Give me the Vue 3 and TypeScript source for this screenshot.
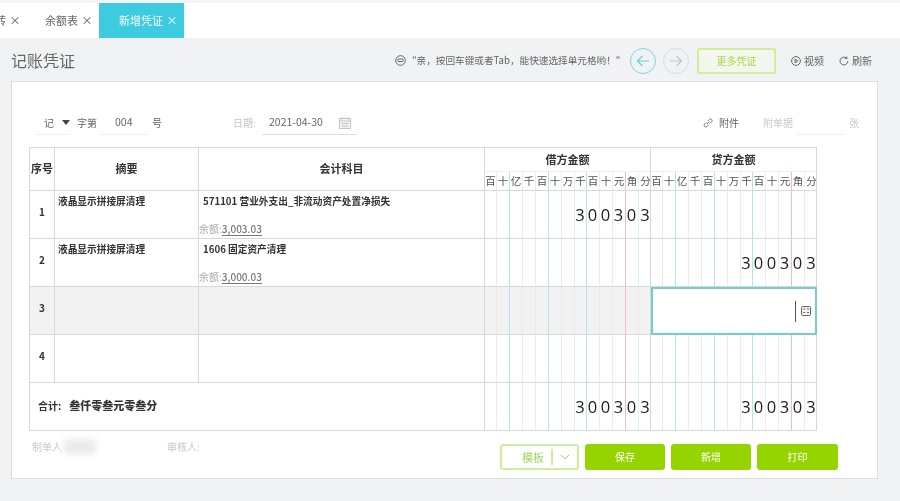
<script setup lang="ts">
const units = ['百','十','亿','千','百','十','万','千','百','十','元','角','分']
const sides = ['debit', 'credit'] as const
type Row = { no: string; summary: string; code: string; balance: string; debit: string; credit: string; active?: boolean }
const rows: Row[] = [
  { no: '1', summary: '液晶显示拼接屏清理', code: '571101 营业外支出_非流动资产处置净损失', balance: '3,003.03', debit: '300303', credit: '' },
  { no: '2', summary: '液晶显示拼接屏清理', code: '1606 固定资产清理', balance: '3,000.03', debit: '', credit: '300303' },
  { no: '3', summary: '', code: '', balance: '', debit: '', credit: '', active: true },
  { no: '4', summary: '', code: '', balance: '', debit: '', credit: '' },
]
function cells(v: string): string[] {
  return Array.from(v.padStart(13, ' '))
}
function lineClass(i: number): string {
  if (i === 1 || i === 4 || i === 7) return 'line-blue'
  if (i === 10) return 'line-red'
  return ''
}
</script>

<template>
  <div class="page">
    <div class="topstrip"></div>
    <nav class="tabs">
      <div class="tab first">结转 <span class="x">×</span></div>
      <div class="tab second">余额表 <span class="x">×</span></div>
      <div class="tab active">新增凭证 <span class="x">×</span></div>
    </nav>

    <header class="toolbar">
      <h1>记账凭证</h1>
      <svg class="tip-icon" width="11" height="11" viewBox="0 0 11 11" fill="none" stroke="#666" stroke-width="1">
        <circle cx="5.5" cy="5.5" r="4.8" /><rect x="2.8" y="4" width="5.4" height="2.6" rx="1" />
      </svg>
      <span class="tip">"亲，按回车键或者Tab，能快速选择单元格哟！"</span>
      <button class="circle left">
        <svg width="14" height="12" viewBox="0 0 14 12" fill="none" stroke="#62cfe3" stroke-width="1.2"><path d="M13 6H1.5M6.5 1 1.5 6l5 5" /></svg>
      </button>
      <button class="circle right">
        <svg width="14" height="12" viewBox="0 0 14 12" fill="none" stroke="#c4c4c4" stroke-width="1.2"><path d="M1 6h11.5M7.5 1l5 5-5 5" /></svg>
      </button>
      <button class="more">更多凭证</button>
      <span class="tool video">
        <svg width="10" height="10" viewBox="0 0 10 10" fill="none" stroke="#666"><circle cx="5" cy="5" r="4.4" /><path d="M4 3.2v3.6L6.8 5z" /></svg>
        视频
      </span>
      <span class="tool refresh">
        <svg width="10" height="10" viewBox="0 0 10 10" fill="none" stroke="#666"><path d="M8.8 5a3.9 3.9 0 1 1-1.2-2.8M7.9 .6v2H5.9" /></svg>
        刷新
      </span>
    </header>

    <main class="card">
      <div class="form">
        <span class="pick"><span>记</span><i class="tri"></i></span>
        <span class="zi">字第</span>
        <span class="num">004</span>
        <span class="hao">号</span>
        <span class="date-label">日期:</span>
        <span class="date">
          <span>2021-04-30</span>
          <svg width="12" height="12" viewBox="0 0 12 12" fill="#f4f4f4" stroke="#c4c4c4"><rect x=".5" y="1.5" width="11" height="10" /><path d="M.5 4h11M3 0v2.5M9 0v2.5M2.5 6.5h7M2.5 9h7" /></svg>
        </span>
        <span class="attach">
          <svg width="10" height="10" viewBox="0 0 10 10" fill="none" stroke="#777"><path d="M4 6 6.4 3.6M3.2 4.6 1.6 6.2a1.6 1.6 0 0 0 2.3 2.3l1.5-1.6M4.8 3 6.3 1.5a1.6 1.6 0 0 1 2.3 2.3L7 5.4" /></svg>
          附件
        </span>
        <span class="bill">附单据</span>
        <span class="bill-input"></span>
        <span class="bill zhang">张</span>
      </div>

      <section class="voucher">
        <div class="head seq">序号</div>
        <div class="head summary">摘要</div>
        <div class="head subject">会计科目</div>
        <div v-for="s in sides" :key="s" class="head money">
          <div class="money-title">{{ s === 'debit' ? '借方金额' : '贷方金额' }}</div>
          <div class="digits units">
            <span v-for="(u, i) in units" :key="i" :class="lineClass(i)">{{ u }}</span>
          </div>
        </div>

        <template v-for="r in rows" :key="r.no">
          <div class="cell no" :class="{ grey: r.active }">{{ r.no }}</div>
          <div class="cell text" :class="{ grey: r.active }">{{ r.summary }}</div>
          <div class="cell account" :class="{ grey: r.active }">
            <div class="code">{{ r.code }}</div>
            <div v-if="r.balance" class="balance">余额:<u>{{ r.balance }}</u></div>
          </div>
          <div class="cell digits" :class="{ grey: r.active }">
            <span v-for="(d, i) in cells(r.debit)" :key="i" :class="lineClass(i)">{{ d }}</span>
          </div>
          <div class="cell digits">
            <span v-for="(d, i) in cells(r.credit)" :key="i" :class="lineClass(i)">{{ d }}</span>
            <div v-if="r.active" class="editor">
              <i class="caret"></i>
              <svg width="10" height="10" viewBox="0 0 10 10" fill="#f2f2f2" stroke="#666"><rect x=".5" y=".5" width="9" height="9" rx="1" /><path d="M2.2 3h2M6 3h2M2.2 6.5h2M6 6.5h2" /></svg>
            </div>
          </div>
        </template>

        <div class="cell total">合计:<b>叁仟零叁元零叁分</b></div>
        <div class="cell digits">
          <span v-for="(d, i) in cells('300303')" :key="i" :class="lineClass(i)">{{ d }}</span>
        </div>
        <div class="cell digits">
          <span v-for="(d, i) in cells('300303')" :key="i" :class="lineClass(i)">{{ d }}</span>
        </div>
      </section>

      <footer class="foot">
        <span class="maker">制单人<i class="smudge"></i></span>
        <span class="checker">审核人:</span>
        <div class="template">
          <span class="tpl-text">模板</span>
          <span class="tpl-arrow">
            <svg width="10" height="6" viewBox="0 0 10 6" fill="none" stroke="#9fbf6a"><path d="m1 .8 4 4 4-4" /></svg>
          </span>
        </div>
        <button class="solid">保存</button>
        <button class="solid">新增</button>
        <button class="solid last">打印</button>
      </footer>
    </main>
  </div>
</template>

<style>
html, body { margin: 0; background: #f1f2f4; }
</style>

<style scoped>
.page {
  width: 900px;
  height: 501px;
  overflow: hidden;
  background: #f1f2f4;
  color: #555;
  font: 10px/1.2 "Noto Sans CJK SC", "Noto Sans", sans-serif;
  filter: blur(0.4px);
}
.topstrip { height: 3px; background: #f4f5f9; }
.tabs { height: 35px; display: flex; align-items: center; background: #fff; font-size: 11px; color: #666; overflow: hidden; }
.tab { white-space: nowrap; line-height: 35px; }
.tab .x { font-size: 11px; margin-left: 1px; color: #555; }
.first { margin-left: -16px; width: 61px; flex: none; }
.second { width: 54px; flex: none; }
.active { width: 85px; flex: none; box-sizing: border-box; padding-left: 20px; background: #3ecbe0; color: #fff; }
.active .x { color: #fff; }

.toolbar { height: 43px; box-sizing: border-box; padding-top: 2px; display: flex; align-items: center; }
h1 { margin: 0 0 0 11px; width: 384px; font-size: 16px; font-weight: 400; color: #666; }
.tip-icon { margin-right: 6px; }
.tip { width: 218px; font-size: 9.65px; color: #666; white-space: nowrap; }
button { font: inherit; padding: 0; cursor: pointer; }
.circle { width: 26px; height: 26px; border-radius: 50%; background: transparent; display: flex; align-items: center; justify-content: center; }
.circle.left { border: 1px solid #7fd6e6; }
.circle.right { margin-left: 7px; border: 1px solid #dcdcdc; }
.more { margin-left: 8px; width: 79px; height: 26px; box-sizing: border-box; border: 2px solid #cfee9b; border-radius: 2px; background: #f4f6ee; color: #a2dc42; }
.tool { display: flex; align-items: center; gap: 3px; color: #666; white-space: nowrap; }
.video { margin-left: 15px; }
.refresh { margin-left: 15px; }

.card { margin-left: 11px; width: 867px; height: 398px; box-sizing: border-box; border: 1px solid #ddd; background: #fff; padding: 0 0 0 17px; display: flex; flex-direction: column; }
.form { margin-top: 29px; height: 24px; display: flex; align-items: center; color: #666; }
.pick { margin-left: 7px; width: 34px; height: 24px; box-sizing: border-box; border-bottom: 1px solid #eee; display: flex; align-items: center; padding-left: 8px; gap: 8px; }
.tri { width: 0; height: 0; border: 4.5px solid transparent; border-top: 5px solid #444; border-bottom: 0; }
.zi { margin-left: 7px; width: 23px; }
.num { width: 48px; height: 24px; box-sizing: border-box; border-bottom: 1px solid #eee; display: flex; align-items: center; padding-left: 15px; font-size: 10.5px; }
.hao { margin-left: 4px; width: 81px; }
.date-label { width: 29px; color: #c2c2c2; }
.date { width: 95px; height: 24px; box-sizing: border-box; border-bottom: 1px solid #ddd; display: flex; align-items: center; justify-content: space-between; padding: 0 6px 0 7px; font-size: 10.5px; }
.attach { margin-left: 346px; width: 60px; display: flex; align-items: center; gap: 6px; white-space: nowrap; }
.bill { color: #c8c8c8; }
.bill-input { margin-left: 4px; width: 48px; height: 24px; box-sizing: border-box; border-bottom: 1px solid #eee; }
.zhang { margin-left: 4px; }

.voucher {
  margin-top: 12px;
  width: 788px;
  height: 284px;
  box-sizing: border-box;
  border-left: 1px solid #d8d8d8;
  border-top: 1px solid #d8d8d8;
  display: grid;
  grid-template-columns: 25px 144px 286px 166px 166px;
  grid-template-rows: 43px repeat(5, 48px);
}
.head, .cell { box-sizing: border-box; border-right: 1px solid #d8d8d8; border-bottom: 1px solid #d8d8d8; min-width: 0; }
.head { color: #333; font-weight: 700; font-size: 11px; display: flex; align-items: center; justify-content: center; white-space: nowrap; }
.money { display: flex; flex-direction: column; align-items: stretch; padding: 0; }
.money-title { height: 24px; line-height: 22px; text-align: center; border-bottom: 1px solid #f0f0f0; box-sizing: border-box; }
.digits { display: grid; grid-template-columns: 12px 13px 13px 13px 13px 13px 13px 12px 13px 13px 13px 13px 13px; position: relative; }
.digits span { border-right: 1px solid #ececec; display: flex; align-items: center; justify-content: center; min-width: 0; }
.digits span:last-of-type { border-right: 0; }
.units { height: 18px; font-size: 10.5px; font-weight: 400; color: #555; }
.cell.digits { font: 400 16.5px "Open Sans", sans-serif; color: #222; }
.cell.digits span { padding-right: 1px; }
.digits .line-blue { border-right-color: #b4e0f8; }
.digits .line-red { border-right-color: #f3bcc4; }
.grey { background: #f2f2f2; }
.no { display: flex; align-items: center; justify-content: center; color: #333; font-weight: 700; font-size: 10px; padding-bottom: 5px; }
.text { padding: 5px 3px; color: #333; font-weight: 700; font-size: 9.7px; white-space: nowrap; }
.account { padding: 5px 0 0 0; display: flex; flex-direction: column; justify-content: space-between; white-space: nowrap; }
.code { margin-left: 4px; color: #333; font-weight: 700; font-size: 9.7px; }
.balance { margin-bottom: 3px; color: #aaa; font-size: 10px; }
.balance u { color: #777; font-weight: 500; text-underline-offset: 2px; }
.editor { position: absolute; inset: 0 -1px -1px 0; box-sizing: border-box; border: 2px solid #70cfca; background: #fff; display: flex; align-items: center; justify-content: flex-end; gap: 5px; padding-right: 4px; }
.caret { width: 1px; height: 21px; background: #555; }
.total { grid-column: 1 / span 3; display: flex; align-items: center; padding: 0 0 2px 8px; color: #333; font-weight: 700; font-size: 10px; }
.total b { margin-left: 8px; font-size: 11px; }

.foot { margin-top: 10px; height: 29px; display: flex; align-items: flex-start; }
.maker { position: relative; margin-left: 3px; width: 135px; color: #c8c8c8; }
.smudge { position: absolute; left: 32px; top: -2px; width: 32px; height: 15px; background: #ebebeb; filter: blur(3px); }
.checker { width: 333px; color: #c8c8c8; }
.template { align-self: flex-end; width: 79px; height: 26px; box-sizing: border-box; border: 2px solid #cfee9b; border-radius: 3px; display: flex; align-items: center; }
.tpl-text { width: 51px; height: 16px; border-right: 2px solid #cfee9b; padding-left: 20px; box-sizing: border-box; font-size: 11px; line-height: 16px; color: #a2d65a; }
.tpl-arrow { flex: 1; display: flex; justify-content: center; }
.solid { align-self: flex-end; margin-left: 6px; width: 80px; height: 26px; border: 0; border-radius: 3px; background: #96d400; color: #fff; font-size: 10px; }
.last { width: 81px; }
</style>
